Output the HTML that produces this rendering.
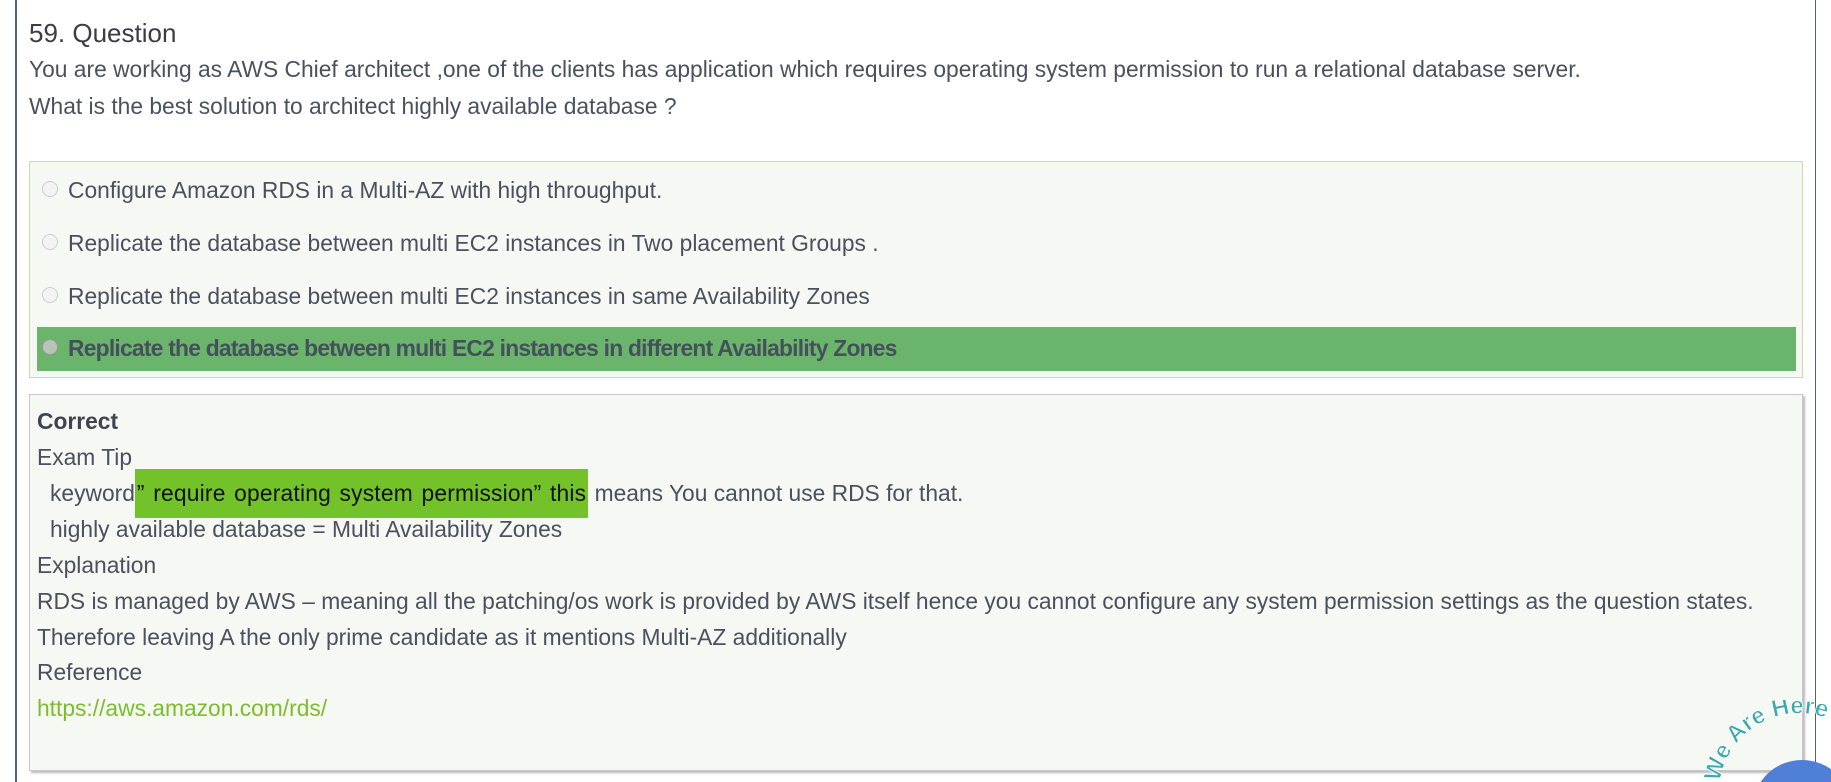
<!DOCTYPE html>
<html><head><meta charset="utf-8"><style>
html,body{margin:0;padding:0;width:1831px;height:782px;overflow:hidden;background:#fff;font-family:"Liberation Sans",sans-serif;color:#4b505e;position:relative;}
.l{position:absolute;left:0;top:0;width:15px;height:782px;border-right:2px solid #56607a;}
.r{position:absolute;left:1815px;top:0;width:1px;height:782px;background:#56607a;}
.t{position:absolute;white-space:nowrap;}
.opts{position:absolute;left:29px;top:161px;width:1774px;height:217px;background:#f6f8f3;border:1px solid #c8dba6;box-sizing:border-box;}
.green{position:absolute;left:37px;top:327px;width:1759px;height:44px;background:#6bb46b;}
.rad{position:absolute;width:16px;height:16px;border-radius:50%;border:1px solid #ccc;background:#f3f3f3;box-sizing:border-box;}
.ans{position:absolute;left:29px;top:394px;width:1774px;height:377px;background:#f6f8f3;border:1px solid #c8c8c8;box-shadow:2px 2px 2px #bbb;box-sizing:border-box;}
.f{font-size:22.8px;}
.hl{background:#74c22a;color:#111;display:inline-block;padding:11px 2px 11px 2px;margin:-11px 0;word-spacing:2px;letter-spacing:0.2px;}
</style></head><body>
<div class="l"></div><div class="r"></div>
<div class="t" style="left:29px;top:18px;font-size:26px;color:#3c3c44">59. Question</div>
<div class="t f" style="left:29px;top:56px">You are working as AWS Chief architect ,one of the clients has application which requires operating system permission to run a relational database server.</div>
<div class="t f" style="left:29px;top:93px">What is the best solution to architect highly available database ?</div>
<div class="opts"></div>
<div class="green"></div>
<div class="rad" style="left:42px;top:181px"></div>
<div class="t f" style="left:68px;top:177px">Configure Amazon RDS in a Multi-AZ with high throughput.</div>
<div class="rad" style="left:42px;top:234px"></div>
<div class="t f" style="left:68px;top:230px">Replicate the database between multi EC2 instances in Two placement Groups .</div>
<div class="rad" style="left:42px;top:287px"></div>
<div class="t f" style="left:68px;top:283px">Replicate the database between multi EC2 instances in same Availability Zones</div>
<div class="rad" style="left:42px;top:339px;background:#b8c4b8;border-color:#999"></div>
<div class="t f" style="left:68px;top:335px;font-weight:bold;color:#44505c;letter-spacing:-0.75px">Replicate the database between multi EC2 instances in different Availability Zones</div>
<div class="ans"></div>
<div class="t f" style="left:37px;top:408px;font-weight:bold;color:#3e4450">Correct</div>
<div class="t f" style="left:37px;top:444px">Exam Tip</div>
<div class="t f" style="left:50px;top:480px">keyword<span class="hl">” require operating system permission” this</span> means You cannot use RDS for that.</div>
<div class="t f" style="left:50px;top:516px">highly available database = Multi Availability Zones</div>
<div class="t f" style="left:37px;top:552px">Explanation</div>
<div class="t f" style="left:37px;top:588px">RDS is managed by AWS – meaning all the patching/os work is provided by AWS itself hence you cannot configure any system permission settings as the question states.</div>
<div class="t f" style="left:37px;top:624px">Therefore leaving A the only prime candidate as it mentions Multi-AZ additionally</div>
<div class="t f" style="left:37px;top:659px">Reference</div>
<div class="t f" style="left:37px;top:695px;color:#7cbd2c">https://aws.amazon.com/rds/</div>
<svg style="position:absolute;left:1690px;top:700px" width="141" height="82">
<circle cx="112" cy="110" r="50" fill="#4f7fd6"/>
<path id="arc" d="M30,82 A80,80 0 0 1 141,20" fill="none"/>
<text font-family="Liberation Sans" font-weight="bold" font-size="24" fill="#3aa8b0" stroke="#fff" stroke-width="0.8"><textPath href="#arc">We Are Here</textPath></text>
</svg>
</body></html>
